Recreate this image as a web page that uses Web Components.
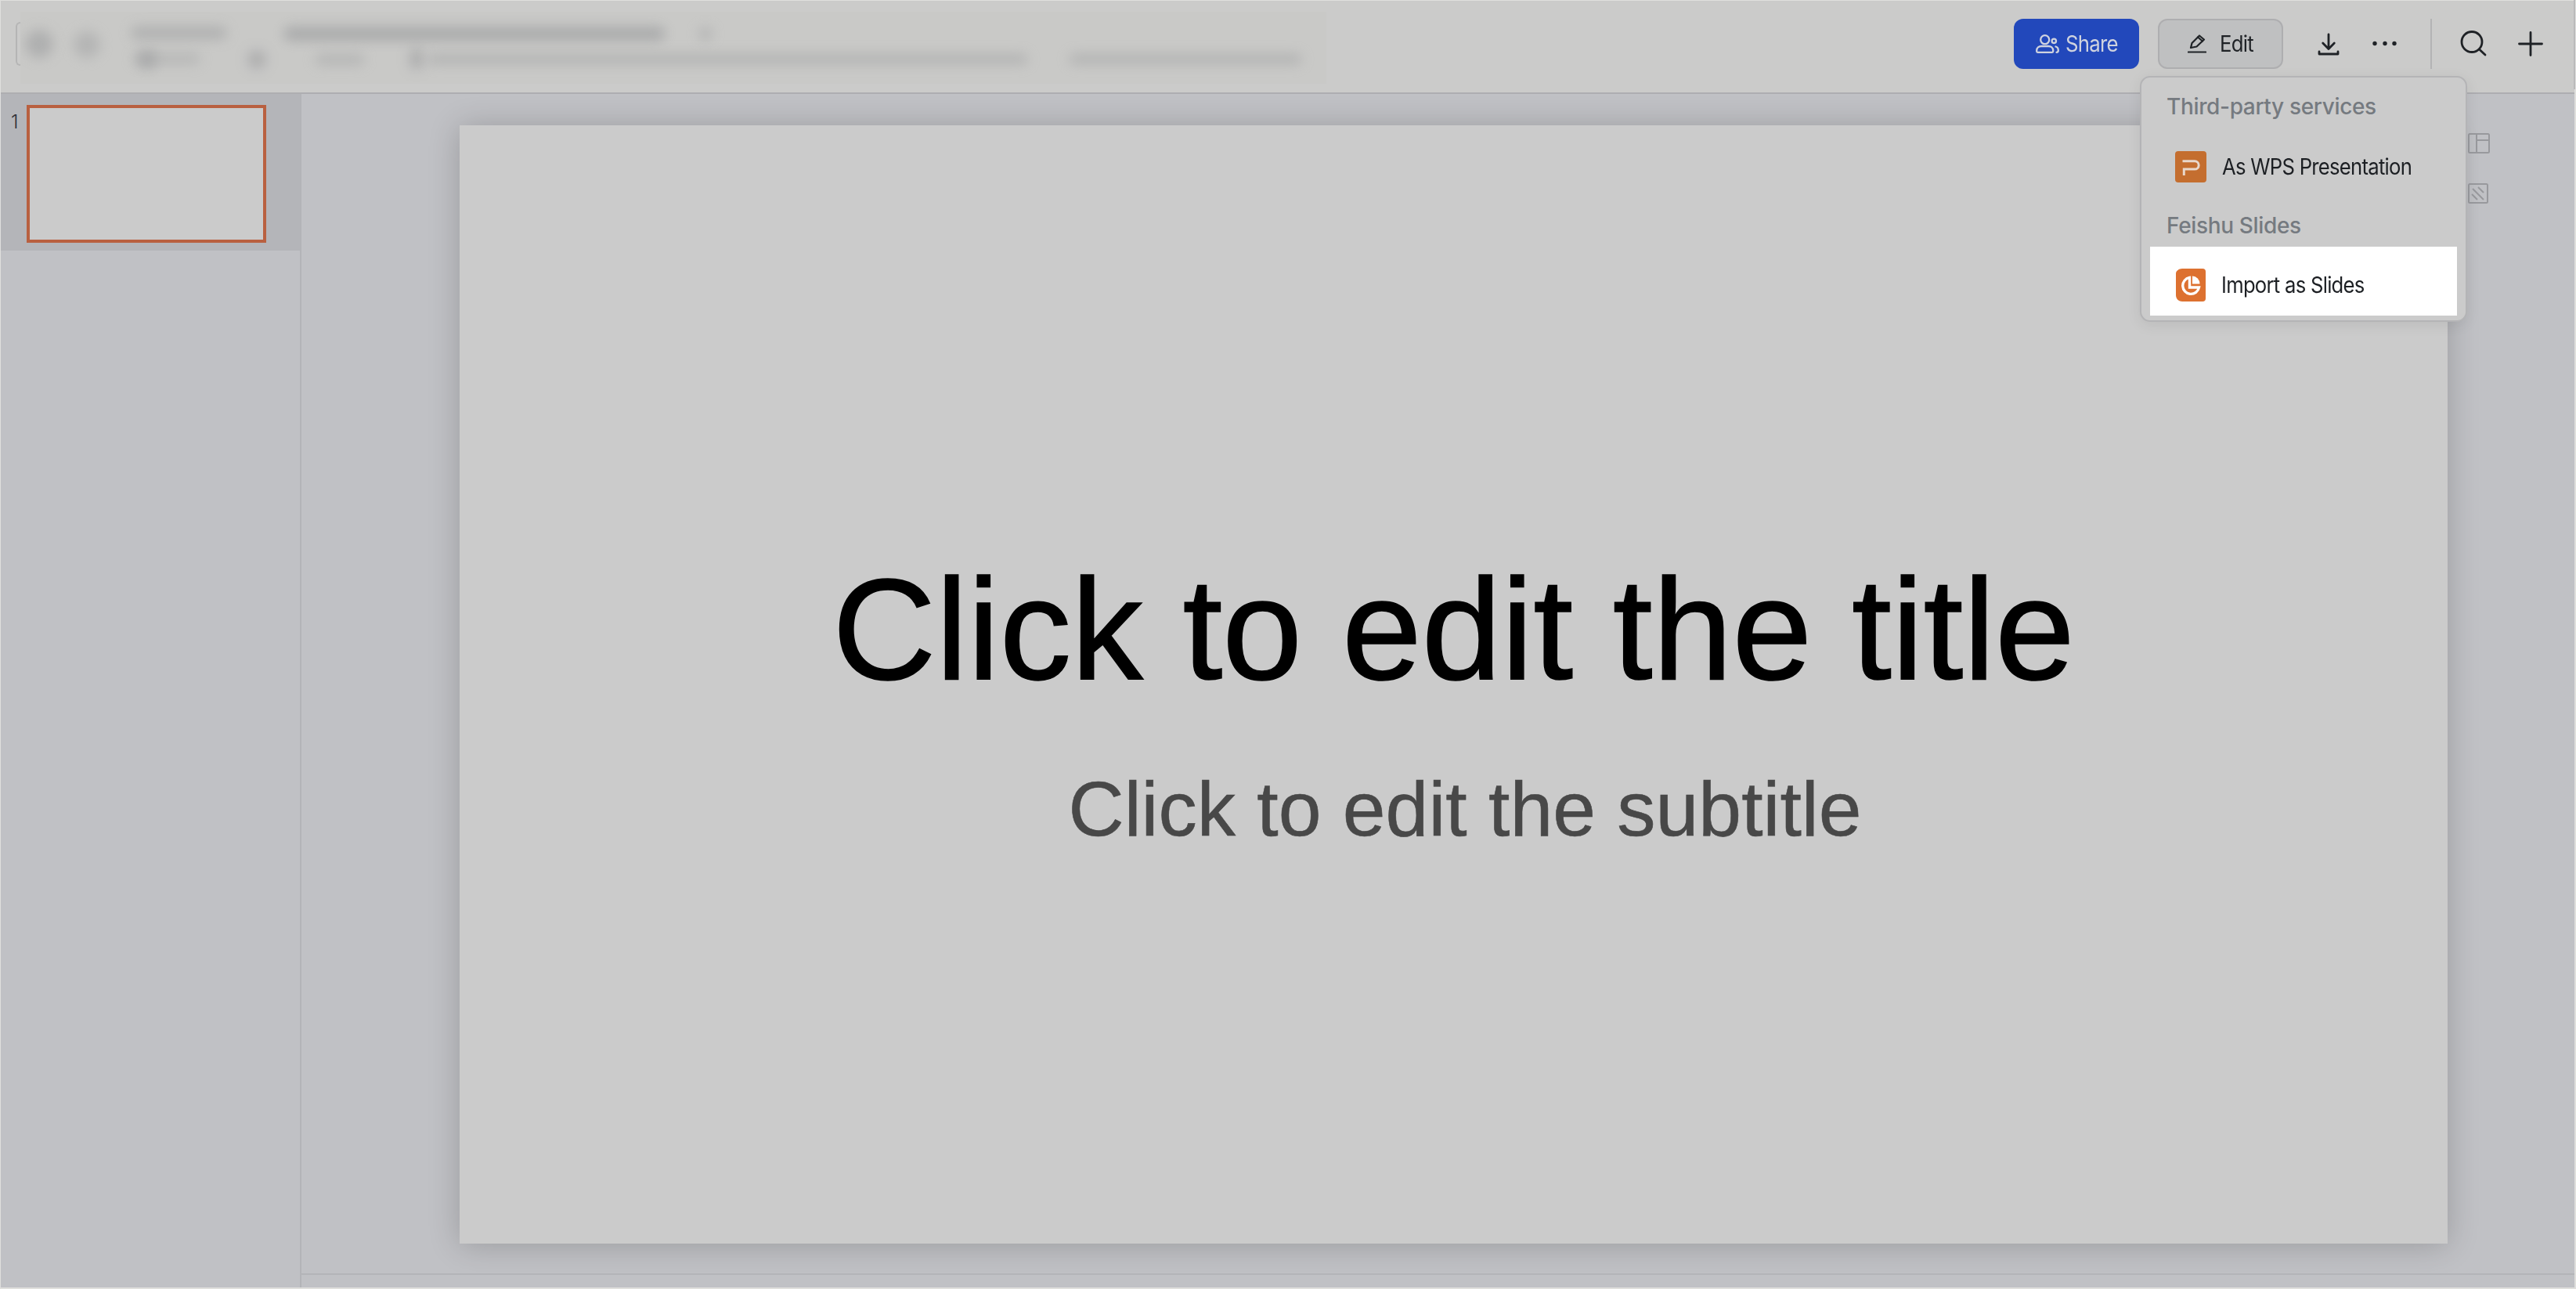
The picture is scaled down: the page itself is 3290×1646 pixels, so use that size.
<!DOCTYPE html>
<html>
<head>
<meta charset="utf-8">
<title>Import as Slides</title>
<style>
  html, body { margin: 0; height: 100%; background: #dfdfdd; overflow: hidden; }
  body { font-family: Inter, "Liberation Sans", sans-serif; }
</style>
</head>
<body>
<app-shell>
  <top-bar slot="top"></top-bar>
  <slide-rail slot="rail"></slide-rail>
  <slide-stage slot="stage"></slide-stage>
</app-shell>
<import-menu></import-menu>

<script>
class AppShell extends HTMLElement {
    connectedCallback() {
        this.attachShadow({ mode: 'open' });
        this.shadowRoot.innerHTML = `
            <style>
                :host {
                    display: flex;
                    flex-direction: column;
                    box-sizing: border-box;
                    width: 3290px;
                    height: 1646px;
                    padding: 1px 2px 2px 1px;
                }
                .body {
                    flex: 1;
                    display: flex;
                    min-height: 0;
                    background: #c0c1c5;
                }
            </style>
            <slot name="top"></slot>
            <div class="body">
                <slot name="rail"></slot>
                <slot name="stage"></slot>
            </div>
        `;
    }
}

class TopBar extends HTMLElement {
    connectedCallback() {
        this.attachShadow({ mode: 'open' });
        this.shadowRoot.innerHTML = `
            <style>
                :host {
                    display: flex;
                    align-items: center;
                    box-sizing: border-box;
                    height: 119px;
                    flex: none;
                    background: #cbcbca;
                    border-bottom: 2px solid #aeaeb1;
                    padding-bottom: 7px;
                }
                .bracket {
                    width: 6px;
                    height: 56px;
                    margin-left: 19px;
                    box-sizing: border-box;
                    border-left: 2px solid #b5b5b5;
                    border-top: 2px solid #b5b5b5;
                    border-bottom: 2px solid #b5b5b5;
                    border-radius: 8px 0 0 8px;
                    flex: none;
                }
                .hidden-info {
                    flex: none;
                    align-self: flex-start;
                    width: 1668px;
                    height: 92px;
                    margin-top: 14px;
                    margin-right: 878px;
                    background: #c9c9c7;
                    position: relative;
                    overflow: hidden;
                }
                /* the title block is unreadable in the reference: soft blobs only */
                .hidden-info i {
                    position: absolute;
                    display: block;
                    background: #a4a5a6;
                    filter: blur(8px);
                    border-radius: 10px;
                }
                .actions {
                    display: flex;
                    align-items: center;
                    flex: none;
                }
                .btn {
                    box-sizing: border-box;
                    display: flex;
                    align-items: center;
                    width: 160px;
                    height: 64px;
                    border-radius: 12px;
                    font-size: 28px;
                    letter-spacing: -.8px;
                }
                .btn span { display: inline-block; transform: scaleX(.92); transform-origin: left center; }
                .share { background: #2248bb; color: #cfd3df; gap: 8px; padding-left: 28px; margin-right: 24px; }
                .edit { background: #bfc0c1; border: 2px solid #aeaeb0; color: #1f2226; gap: 17px; padding-left: 36px; margin-right: 40px; }
                .icon { display: block; flex: none; }
                .tool { width: 36px; height: 36px; color: #1f2226; }
                .rule { width: 2px; height: 64px; background: #b3b3b4; }
                .edge { width: 2px; height: 116px; margin-left: 37px; background: #b9b9ba; }
            </style>
            <div class="bracket"></div>
            <div class="hidden-info">
                <i style="left:6px;top:23px;width:36px;height:36px;border-radius:50%;opacity:.7"></i>
                <i style="left:68px;top:25px;width:34px;height:34px;border-radius:50%;opacity:.55"></i>
                <i style="left:141px;top:19px;width:123px;height:16px;opacity:.7"></i>
                <i style="left:150px;top:49px;width:24px;height:24px;border-radius:50%;opacity:.8"></i>
                <i style="left:144px;top:53px;width:86px;height:14px;opacity:.5"></i>
                <i style="left:336px;top:19px;width:488px;height:18px;opacity:.85"></i>
                <i style="left:866px;top:20px;width:18px;height:16px;opacity:.6"></i>
                <i style="left:290px;top:49px;width:24px;height:24px;border-radius:50%;opacity:.75"></i>
                <i style="left:376px;top:54px;width:64px;height:14px;opacity:.55"></i>
                <i style="left:497px;top:46px;width:18px;height:28px;opacity:.75"></i>
                <i style="left:520px;top:54px;width:767px;height:13px;opacity:.62"></i>
                <i style="left:1339px;top:54px;width:298px;height:13px;opacity:.62"></i>
            </div>
            <div class="actions">
                <div class="btn share">
                    <svg class="icon" width="30" height="24" viewBox="0 0 30 24" fill="none" stroke="currentColor" stroke-width="2.300" stroke-linecap="round" stroke-linejoin="round">
                        <circle cx="11.700" cy="6.700" r="5.500"/>
                        <path d="M1.200 20.500c0-3.500 2.800-5.500 6-5.500h9c3.200 0 6 2 6 5.500v1c0 .8-.5 1.300-1.300 1.300H2.500c-.8 0-1.300-.5-1.300-1.300z"/>
                        <circle cx="23.300" cy="8.300" r="2.700"/>
                        <path d="M25.500 15.500c2.400.6 3.300 2.500 3.300 5 0 1.500-.7 2.300-2.300 2.300"/>
                    </svg>
                    <span>Share</span>
                </div>
                <div class="btn edit">
                    <svg class="icon" width="24" height="24" viewBox="0 0 24 24" fill="none" stroke="currentColor" stroke-width="2.200" stroke-linejoin="round" stroke-linecap="round">
                        <path d="M4 17l1.500-6L15 1.500l6 5L11.500 15.500z"/>
                        <path d="M13 3.500l6 5"/>
                        <path d="M.8 22.500h22.400"/>
                    </svg>
                    <span>Edit</span>
                </div>
                <svg class="icon tool" viewBox="0 0 36 36" fill="none" stroke="currentColor" stroke-width="2.800" stroke-linecap="round" stroke-linejoin="round">
                    <path d="M18 6v18M10.700 17 18 24.500 25.300 17"/>
                    <path d="M6 28v3h24v-3"/>
                </svg>
                <svg class="icon tool" style="margin-left:36px" viewBox="0 0 36 36" fill="currentColor">
                    <circle cx="5" cy="17.500" r="2.700"/><circle cx="18" cy="17.500" r="2.700"/><circle cx="30" cy="17.500" r="2.700"/>
                </svg>
                <div class="rule" style="margin-left:40px"></div>
                <svg class="icon tool" style="margin-left:34px" viewBox="0 0 36 36" fill="none" stroke="currentColor" stroke-width="2.800" stroke-linecap="round">
                    <circle cx="17" cy="15.500" r="13"/><path d="M26.500 25 34 32"/>
                </svg>
                <svg class="icon tool" style="margin-left:38px" viewBox="0 0 36 36" fill="none" stroke="currentColor" stroke-width="2.800" stroke-linecap="round">
                    <path d="M18 3.500v29M3.500 18h29"/>
                </svg>
                <div class="edge"></div>
            </div>
        `;
    }
}

class SlideRail extends HTMLElement {
    connectedCallback() {
        this.attachShadow({ mode: 'open' });
        this.shadowRoot.innerHTML = `
            <style>
                :host {
                    display: block;
                    flex: none;
                    width: 384px;
                    box-sizing: border-box;
                    border-right: 2px solid #b3b4b8;
                }
                .row {
                    display: flex;
                    height: 200px;
                    box-sizing: border-box;
                    padding: 14px 0 0 13px;
                    background: #b4b5b9;
                }
                .num {
                    width: 20px;
                    font: 300 24px/44px Inter, sans-serif;
                    color: #2c2f36;
                }
                .thumb {
                    box-sizing: border-box;
                    width: 306px;
                    height: 176px;
                    border: 4px solid #b96040;
                    background: #cbcbcb;
                }
            </style>
            <div class="row">
                <div class="num">1</div>
                <div class="thumb"></div>
            </div>
        `;
    }
}

class SlideStage extends HTMLElement {
    connectedCallback() {
        this.attachShadow({ mode: 'open' });
        this.shadowRoot.innerHTML = `
            <style>
                :host {
                    display: flex;
                    flex-direction: column;
                    flex: 1;
                    min-width: 0;
                }
                .work {
                    flex: 1;
                    display: flex;
                    align-items: flex-start;
                    gap: 26px;
                    padding: 40px 0 0 202px;
                    overflow: hidden;
                    min-height: 0;
                }
                .slide {
                    flex: none;
                    box-sizing: border-box;
                    width: 2539px;
                    height: 1428px;
                    background: #cbcbcb;
                    box-shadow: 0 2px 38px rgba(0, 0, 0, .2);
                    display: flex;
                    flex-direction: column;
                    align-items: center;
                    font-family: "Liberation Sans", Arial, sans-serif;
                }
                .title { margin-top: 539px; font-size: 183px; line-height: 210px; color: #000; white-space: nowrap; -webkit-text-stroke: 1.5px #000; }
                .sub { margin-top: 67px; margin-left: 29px; font-size: 98.500px; line-height: 114px; color: #484848; white-space: nowrap; -webkit-text-stroke: .6px #484848; }
                .side {
                    display: flex;
                    flex-direction: column;
                    gap: 38px;
                    padding-top: 10px;
                }
                .side svg { display: block; }
                .foot { height: 16px; flex: none; border-top: 2px solid #b3b4b8; }
            </style>
            <div class="work">
                <div class="slide">
                    <div class="title">Click to edit the title</div>
                    <div class="sub">Click to edit the subtitle</div>
                </div>
                <div class="side">
                    <svg width="28" height="26" viewBox="0 0 28 26" fill="none" stroke="#98999d" stroke-width="2">
                        <rect x="1" y="1" width="26" height="24" rx="1.500"/>
                        <path d="M11 1v24M11 9h16"/>
                    </svg>
                    <svg width="26" height="26" viewBox="0 0 26 26" fill="none" stroke="#98999d" stroke-width="2">
                        <rect x="1" y="1" width="24" height="24" rx="1.500"/>
                        <path d="M13 5l7 7M6 7l14 14M5 14l7 7"/>
                    </svg>
                </div>
            </div>
            <div class="foot"></div>
        `;
    }
}

class MenuItem extends HTMLElement {
    connectedCallback() {
        this.attachShadow({ mode: 'open' });
        this.shadowRoot.innerHTML = `
            <style>
                :host {
                    display: flex;
                    align-items: center;
                    gap: 20px;
                    height: 88px;
                    box-sizing: border-box;
                    padding-left: 32px;
                    color: #1c1f23;
                    font-size: 28px;
                    letter-spacing: -.8px;
                    white-space: nowrap;
                }
                :host([active]) { background: #fff; padding-top: 10px; }
                ::slotted(svg) { display: block; flex: none; }
                ::slotted(span) { display: inline-block; transform: scaleX(.916); transform-origin: left center; }
            </style>
            <slot name="icon"></slot>
            <slot></slot>
        `;
    }
}

class ImportMenu extends HTMLElement {
    connectedCallback() {
        this.attachShadow({ mode: 'open' });
        this.shadowRoot.innerHTML = `
            <style>
                :host {
                    position: absolute;
                    left: 2733px;
                    top: 97px;
                    width: 418px;
                    height: 314px;
                    box-sizing: border-box;
                    padding: 0 11px;
                    background: #cbcbcb;
                    border: 2px solid #b4b4b6;
                    border-radius: 13px;
                    box-shadow: 0 4px 18px rgba(0, 0, 0, .08);
                }
                .label {
                    line-height: 54px;
                    padding: 10px 0 6px 21px;
                    font-size: 28px;
                    font-weight: 500;
                    letter-spacing: -.35px;
                    color: #757a80;
                    white-space: nowrap;
                }
                .label.next { padding: 4px 0 0 21px; }
            </style>
            <div class="label">Third-party services</div>
            <menu-item>
                <svg slot="icon" width="40" height="40" viewBox="0 0 40 40">
                    <rect width="40" height="40" rx="4" fill="#c46e2f"/>
                    <path d="M9.500 12.700H25a5.200 5.200 0 0 1 0 10.400H11.300V31" fill="none" stroke="#e8d8cb" stroke-width="3"/>
                </svg>
                <span>As WPS Presentation</span>
            </menu-item>
            <div class="label next">Feishu Slides</div>
            <menu-item active>
                <svg slot="icon" width="38" height="42" viewBox="0 0 38 42" style="margin-left:1px">
                    <path d="M8 0h26a4 4 0 0 1 4 4v34a4 4 0 0 1-4 4H8c-4 0-8-3-8-8V6c0-3 4-6 8-6z" fill="#dd7130"/>
                    <path d="M17.500 11.500a10.500 10.500 0 1 0 12 12.500H17.500z" fill="none" stroke="#fff" stroke-width="3.400"/>
                    <path d="M21 9.500a10 10 0 0 1 9.500 10H21z" fill="#fff"/>
                </svg>
                <span>Import as Slides</span>
            </menu-item>
        `;
    }
}

customElements.define('app-shell', AppShell);
customElements.define('top-bar', TopBar);
customElements.define('slide-rail', SlideRail);
customElements.define('slide-stage', SlideStage);
customElements.define('menu-item', MenuItem);
customElements.define('import-menu', ImportMenu);
</script>
</body>
</html>
